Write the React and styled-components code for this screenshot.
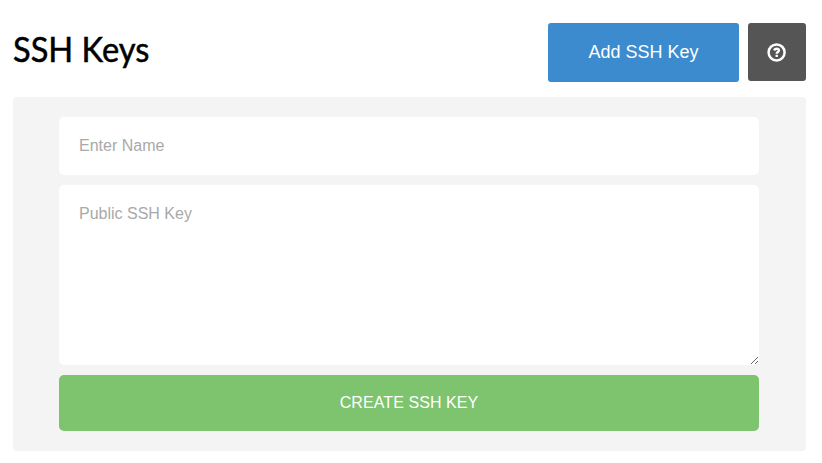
import React from 'react';
import styled, { createGlobalStyle } from 'styled-components';

const GlobalStyle = createGlobalStyle`
  *, *::before, *::after { box-sizing: border-box; }
  body {
    margin: 0;
    background: #fff;
    font-family: "Liberation Sans", Arial, sans-serif;
  }
`;

const Page = styled.main`
  width: 822px;
  height: 463px;
  padding: 23px 16px 12px 13px;
  overflow: hidden;
`;

const Header = styled.header`
  display: flex;
  align-items: flex-start;
  height: 74px;
`;

const Title = styled.h1`
  flex: 1;
  margin: 0;
  font: 400 34.5px/51px Lato, sans-serif;
  color: #000;
  -webkit-text-stroke: 0.5px #000;
  transform: scaleX(0.945);
  transform-origin: left center;
`;

const Actions = styled.div`
  display: flex;
  gap: 9px;
`;

const AddButton = styled.button`
  width: 191px;
  height: 59px;
  padding: 0 0 1px;
  border: 0;
  border-radius: 3px;
  background: #3b8bce;
  color: #fff;
  font: 18px "Liberation Sans", Arial, sans-serif;
`;

const HelpButton = styled.button`
  display: flex;
  align-items: center;
  justify-content: center;
  width: 58px;
  height: 58px;
  padding: 0;
  border: 0;
  border-radius: 3px;
  background: #555;
  color: #fff;
`;

const Form = styled.form`
  display: flex;
  flex-direction: column;
  gap: 10px;
  height: 354px;
  padding: 20px 47px 20px 46px;
  border-radius: 4px;
  background: #f4f4f4;
`;

const Field = styled.input`
  display: block;
  width: 100%;
  height: ${({ $height }) => $height}px;
  margin: 0;
  padding: 19px 20px;
  border: 0;
  border-radius: 5px;
  outline: 0;
  background: #fff;
  color: #333;
  font: 16px/20px "Liberation Sans", Arial, sans-serif;
  resize: vertical;

  &::placeholder { color: #a9a9a9; opacity: 1; }
`;

const SubmitButton = styled.button`
  height: 56px;
  padding: 0 0 1px;
  border: 0;
  border-radius: 5px;
  background: #7ec36e;
  color: #fff;
  font: 16px "Liberation Sans", Arial, sans-serif;
  letter-spacing: 0.07px;
  text-transform: uppercase;
`;

const HelpIcon = () => (
  <svg width="20" height="20" viewBox="0 0 20 20" fill="none" aria-hidden="true">
    <circle cx="9.6" cy="10.4" r="8" stroke="currentColor" strokeWidth="2.5" />
    <path
      d="M7.1 8.4C7.6 7.4 8.5 6.8 9.6 6.8c1.3 0 2.3.7 2.3 1.7 0 1.6-2.2 1.5-2.2 3.2"
      stroke="currentColor"
      strokeWidth="2.4"
    />
    <rect x="8.5" y="12.7" width="2.4" height="2.2" rx="0.3" fill="currentColor" />
  </svg>
);

export default function App() {
  return (
    <>
      <GlobalStyle />
      <Page>
        <Header>
          <Title>SSH Keys</Title>
          <Actions>
            <AddButton type="button">Add SSH Key</AddButton>
            <HelpButton type="button" aria-label="Help">
              <HelpIcon />
            </HelpButton>
          </Actions>
        </Header>
        <Form>
          <Field type="text" placeholder="Enter Name" $height={58} />
          <Field as="textarea" placeholder="Public SSH Key" $height={180} />
          <SubmitButton type="button">Create SSH Key</SubmitButton>
        </Form>
      </Page>
    </>
  );
}
